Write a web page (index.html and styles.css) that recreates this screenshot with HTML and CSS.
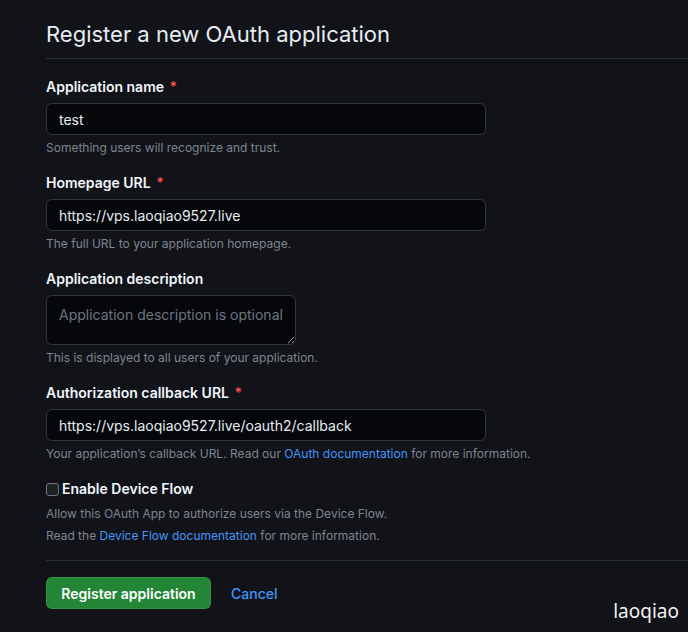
FILE: index.html
```html
<!DOCTYPE html>
<html lang="en">
<head>
<meta charset="utf-8">
<title>Register a new OAuth application</title>
<link rel="stylesheet" href="styles.css">
</head>
<body>
<main class="page">
  <h1 class="subhead">Register a new OAuth application</h1>
  <form class="form">
    <div class="group">
      <label class="label">Application name <span class="req">*</span></label>
      <input class="input" type="text" value="test">
      <p class="note">Something users will recognize and trust.</p>
    </div>
    <div class="group">
      <label class="label">Homepage URL <span class="req">*</span></label>
      <input class="input" type="text" value="https://vps.laoqiao9527.live">
      <p class="note">The full URL to your application homepage.</p>
    </div>
    <div class="group">
      <label class="label">Application description</label>
      <textarea class="textarea" placeholder="Application description is optional"></textarea>
      <p class="note">This is displayed to all users of your application.</p>
    </div>
    <div class="group">
      <label class="label">Authorization callback URL <span class="req">*</span></label>
      <input class="input" type="text" value="https://vps.laoqiao9527.live/oauth2/callback">
      <p class="note">Your application’s callback URL. Read our <a class="link" href="#">OAuth documentation</a> for more information.</p>
    </div>
    <div class="check-group">
      <label class="check-row"><input class="checkbox" type="checkbox"><span>Enable Device Flow</span></label>
      <p class="note note-first">Allow this OAuth App to authorize users via the Device Flow.</p>
      <p class="note note-gap">Read the <a class="link" href="#">Device Flow documentation</a> for more information.</p>
    </div>
    <div class="actions">
      <button class="btn-primary" type="button">Register application</button>
      <a class="cancel" href="#">Cancel</a>
    </div>
  </form>
</main>
<div class="watermark">laoqiao</div>
</body>
</html>
```

FILE: styles.css
```css
html, body {
  margin: 0;
  padding: 0;
  background: #111318;
  height: 100%;
}
body {
  font-family: Inter, "Noto Sans", "Liberation Sans", sans-serif;
  color: #e6edf3;
  overflow: hidden;
  position: relative;
}
.page {
  padding: 16px 0 0 46px;
}
.subhead {
  margin: 0;
  font-size: 22px;
  line-height: 36px;
  font-weight: 400;
  color: #e6edf3;
  padding-bottom: 6px;
  border-bottom: 1px solid #2b2f36;
}
.form {
  display: flex;
  flex-direction: column;
  padding-top: 18px;
}
.group {
  display: flex;
  flex-direction: column;
  align-items: flex-start;
  margin-bottom: 16px;
}
.label {
  font-size: 14px;
  line-height: 20px;
  font-weight: 600;
  color: #f0f6fc;
  margin-bottom: 6px;
}
.req {
  color: #f85149;
  margin-left: 2px;
}
.input, .textarea {
  box-sizing: border-box;
  width: 440px;
  height: 32px;
  background: #05070a;
  border: 1px solid #30363d;
  border-radius: 6px;
  color: #e6edf3;
  font-family: inherit;
  font-size: 14px;
  padding: 0 12px;
  outline: none;
}
.textarea {
  width: 250px;
  height: 50px;
  padding: 9px 12px;
  resize: both;
  line-height: 20px;
}
.textarea::placeholder {
  color: #6e7681;
}
.note {
  margin: 4px 0 0;
  font-size: 12px;
  line-height: 18px;
  color: #7d8590;
}
.note-first {
  margin-top: 6px;
}
.note-gap {
  margin-top: 4px;
}
.link {
  color: #4493f8;
  text-decoration: none;
}
.check-group {
  display: flex;
  flex-direction: column;
}
.check-row {
  display: flex;
  align-items: center;
  gap: 3px;
  font-size: 14px;
  line-height: 20px;
  font-weight: 600;
  color: #f0f6fc;
}
.checkbox {
  appearance: none;
  -webkit-appearance: none;
  margin: 0;
  width: 13px;
  height: 13px;
  border: 1px solid #6e7681;
  border-radius: 3px;
  background: #1d2025;
  box-sizing: border-box;
}
.actions {
  margin-top: 15px;
  border-top: 1px solid #2b2f36;
  padding-top: 16px;
  display: flex;
  align-items: center;
  gap: 20px;
}
.btn-primary {
  box-sizing: border-box;
  width: 165px;
  height: 32px;
  background: #238636;
  color: #ffffff;
  border: 1px solid rgba(240, 246, 252, 0.1);
  border-radius: 6px;
  font-family: inherit;
  font-size: 14px;
  font-weight: 600;
  padding: 0;
  white-space: nowrap;
  text-align: center;
}
.cancel {
  color: #4493f8;
  text-decoration: none;
  font-size: 14px;
  font-weight: 500;
}
.watermark {
  position: absolute;
  right: 9px;
  bottom: 8px;
  font-family: "Noto Sans", "DejaVu Sans", sans-serif;
  font-size: 19px;
  color: #f2f2f2;
}
```
